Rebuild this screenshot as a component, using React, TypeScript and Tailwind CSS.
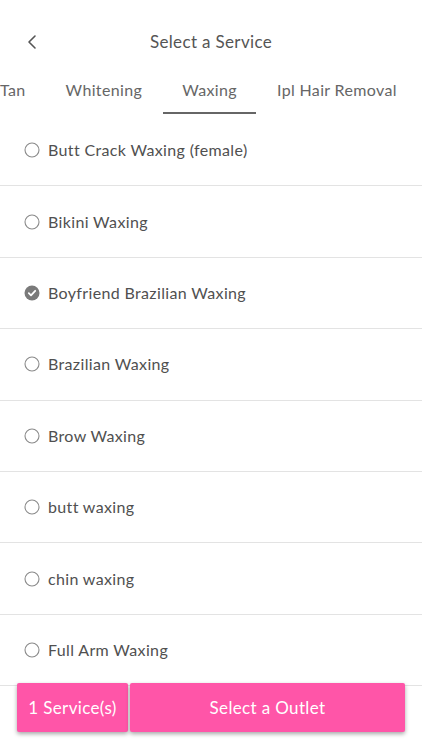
import { ChevronLeft } from "lucide-react";

const tabs = ["Tan", "Whitening", "Waxing", "Ipl Hair Removal"];

const services = [
  { name: "Butt Crack Waxing (female)", checked: false },
  { name: "Bikini Waxing", checked: false },
  { name: "Boyfriend Brazilian Waxing", checked: true },
  { name: "Brazilian Waxing", checked: false },
  { name: "Brow Waxing", checked: false },
  { name: "butt waxing", checked: false },
  { name: "chin waxing", checked: false },
  { name: "Full Arm Waxing", checked: false },
];

const Radio = ({ checked }: { checked: boolean }) =>
  checked ? (
    <svg width="16" height="16" viewBox="0 0 16 16" className="shrink-0">
      <circle cx="8" cy="8" r="7.5" fill="#7a7a7a" />
      <path d="M4.8 8.2 L7 10.3 L11.2 5.8" stroke="#fff" strokeWidth="1.8" fill="none" strokeLinecap="round" strokeLinejoin="round" />
    </svg>
  ) : (
    <svg width="16" height="16" viewBox="0 0 16 16" className="shrink-0">
      <circle cx="8" cy="8" r="7" fill="none" stroke="#8a8a8a" strokeWidth="1.1" />
    </svg>
  );

export default function App() {
  return (
    <div
      className="relative w-[422px] h-[750px] overflow-hidden bg-white text-[#4a4a4a] tracking-[0.35px]"
      style={{ fontFamily: "Lato, 'Noto Sans', sans-serif" }}
    >
      <div className="h-[20px]" />
      <div className="relative flex items-center justify-center h-[44px]">
        <ChevronLeft className="absolute left-[20px] text-[#555]" size={24} strokeWidth={1.6} />
        <span className="text-[17px] text-[#555]">Select a Service</span>
      </div>
      <div className="overflow-hidden h-[51px]">
        <div className="flex -ml-[20px] whitespace-nowrap">
          {tabs.map((t) => (
            <div key={t} className="flex flex-col items-stretch">
              <span className="px-[20px] pt-[16px] pb-[12px] text-[16px] text-[#666] leading-[20px]">{t}</span>
              <div className={t === "Waxing" ? "mx-[1px] h-[2px] bg-[#666]" : "h-[2px]"} />
            </div>
          ))}
        </div>
      </div>
      <div className="flex flex-col">
        {services.map((s) => (
          <div key={s.name} className="flex items-center gap-[8px] h-[71.4px] pl-[24px] border-b border-[#e3e3e3]">
            <Radio checked={s.checked} />
            <span className="text-[16px] text-[#505050]">{s.name}</span>
          </div>
        ))}
      </div>
      <div className="absolute left-[17px] top-[683px] flex gap-[2px]">
        <button className="w-[111px] h-[49px] rounded-[2px] bg-[#ff55a8] text-white text-[17px] shadow-[0_2px_4px_rgba(0,0,0,0.35)]">
          1 Service(s)
        </button>
        <button className="w-[275px] h-[49px] rounded-[2px] bg-[#ff55a8] text-white text-[17px] shadow-[0_2px_4px_rgba(0,0,0,0.35)]">
          Select a Outlet
        </button>
      </div>
    </div>
  );
}
